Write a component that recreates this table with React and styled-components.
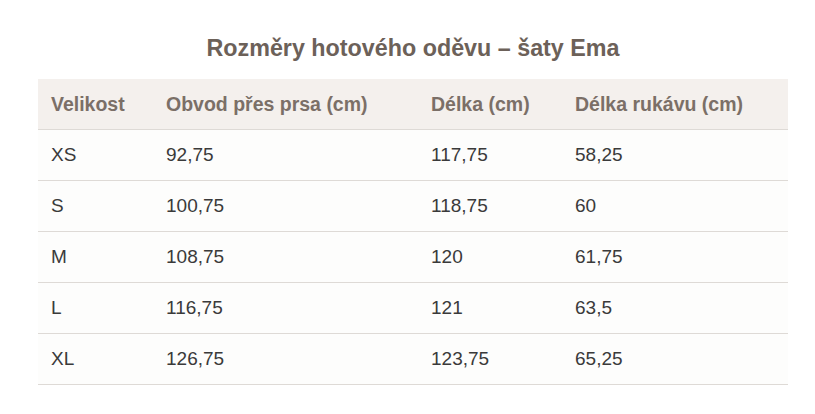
import React from "react";
import styled, { createGlobalStyle } from "styled-components";

const Global = createGlobalStyle`
  html, body { margin: 0; padding: 0; background: #ffffff; }
  body { font-family: "Liberation Sans", Arial, sans-serif; }
`;

const Page = styled.div`
  padding: 33px 27px 0 38px;
  display: flex;
  flex-direction: column;
  align-items: stretch;
`;

const Title = styled.h2`
  margin: 0 0 16px;
  text-align: center;
  font-size: 23.3px;
  line-height: 30px;
  font-weight: 700;
  color: #6c6159;
`;

const Table = styled.table`
  width: 750px;
  border-collapse: collapse;
  table-layout: fixed;
`;

const HeadCell = styled.th`
  width: ${(p) => p.$w}px;
  height: 50px;
  padding: 0 13px;
  text-align: left;
  font-size: 19.5px;
  font-weight: 700;
  color: #7b6f67;
  background: #f4f0ed;
  border-bottom: 1px solid #dedad6;
`;

const Row = styled.tr`
  background: #fdfdfc;
`;

const Cell = styled.td`
  height: 50px;
  padding: 0 13px;
  font-size: 19px;
  color: #3a3a3a;
  border-bottom: 1px solid #dedad6;
`;

const cols = [
  { label: "Velikost", w: 89 },
  { label: "Obvod přes prsa (cm)", w: 239 },
  { label: "Délka (cm)", w: 118 },
  { label: "Délka rukávu (cm)", w: 200 },
];

const rows = [
  ["XS", "92,75", "117,75", "58,25"],
  ["S", "100,75", "118,75", "60"],
  ["M", "108,75", "120", "61,75"],
  ["L", "116,75", "121", "63,5"],
  ["XL", "126,75", "123,75", "65,25"],
];

export default function App() {
  return (
    <>
      <Global />
      <Page>
        <Title>Rozměry hotového oděvu – šaty Ema</Title>
        <Table>
          <thead>
            <tr>
              {cols.map((c) => (
                <HeadCell key={c.label} $w={c.w}>{c.label}</HeadCell>
              ))}
            </tr>
          </thead>
          <tbody>
            {rows.map((r) => (
              <Row key={r[0]}>
                {r.map((v, i) => (
                  <Cell key={i}>{v}</Cell>
                ))}
              </Row>
            ))}
          </tbody>
        </Table>
      </Page>
    </>
  );
}
